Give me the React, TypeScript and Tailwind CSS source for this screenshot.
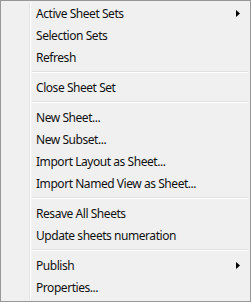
import React from "react";

type Entry = { label: string; sub?: boolean } | "sep";

const entries: Entry[] = [
  { label: "Active Sheet Sets", sub: true },
  { label: "Selection Sets" },
  { label: "Refresh" },
  "sep",
  { label: "Close Sheet Set" },
  "sep",
  { label: "New Sheet..." },
  { label: "New Subset..." },
  { label: "Import Layout as Sheet..." },
  { label: "Import Named View as Sheet..." },
  "sep",
  { label: "Resave All Sheets" },
  { label: "Update sheets numeration" },
  "sep",
  { label: "Publish", sub: true },
  { label: "Properties..." },
];

export default function App() {
  return (
    <div
      className="w-[251px] h-[302px] border border-[#979797] bg-[#f0f0f0] text-[#111]"
      style={{ fontFamily: '"Noto Sans", "Open Sans", sans-serif' }}
    >
      <div className="flex h-full pt-[1px] pb-[2px] px-[1px]">
        <div className="w-[28px] border-r border-[#e2e3e3]" />
        <div className="flex-1 flex flex-col border-l border-white">
          {entries.map((e, i) =>
            e === "sep" ? (
              <div key={i} className="py-[3px] pl-[1px] pr-[1px]">
                <div className="h-px bg-[#e0e0e0]" />
                <div className="h-px bg-white" />
              </div>
            ) : (
              <div key={i} className="h-[22px] flex items-center justify-between pl-[5px] pr-[9px] pt-px text-[12px] leading-none tracking-[-0.45px]">
                <span>{e.label}</span>
                {e.sub && (
                  <svg width="4" height="7" viewBox="0 0 4 7">
                    <path d="M0 0 L4 3.5 L0 7 Z" fill="#000" />
                  </svg>
                )}
              </div>
            )
          )}
        </div>
      </div>
    </div>
  );
}
